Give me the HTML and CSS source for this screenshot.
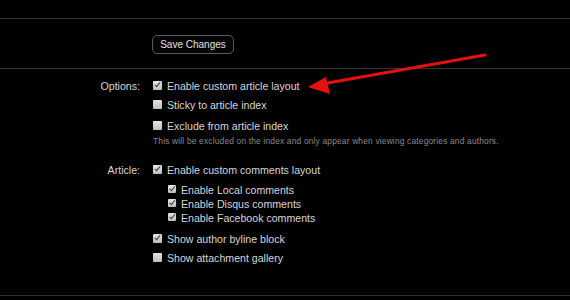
FILE: index.html
```html
<!DOCTYPE html>
<html lang="en">
<head>
    <meta charset="UTF-8">
    <title>Article Options</title>
    <link rel="stylesheet" href="styles.css">
</head>
<body>
    <div class="save-bar">
        <button class="save-btn">Save Changes</button>
    </div>

    <div class="options">
        <div class="field">
            <div class="field-label">Options:</div>
            <div class="field-body">
                <div class="opt"><span class="cb checked"></span>Enable custom article layout</div>
                <div class="opt opt-sticky"><span class="cb"></span>Sticky to article index</div>
                <div class="opt opt-exclude"><span class="cb"></span>Exclude from article index</div>
                <div class="hint">This will be excluded on the index and only appear when viewing categories and authors.</div>
            </div>
        </div>

        <div class="field field-article">
            <div class="field-label">Article:</div>
            <div class="field-body">
                <div class="opt"><span class="cb checked"></span>Enable custom comments layout</div>
                <div class="sub-opts">
                    <div class="sub"><span class="cb checked"></span>Enable Local comments</div>
                    <div class="sub"><span class="cb checked"></span>Enable Disqus comments</div>
                    <div class="sub"><span class="cb checked"></span>Enable Facebook comments</div>
                </div>
                <div class="opt opt-byline"><span class="cb checked"></span>Show author byline block</div>
                <div class="opt opt-gallery"><span class="cb"></span>Show attachment gallery</div>
            </div>
        </div>
    </div>

    <svg class="arrow" width="570" height="300" viewBox="0 0 570 300">
        <line x1="485" y1="55" x2="322" y2="84" stroke="#e3120f" stroke-width="3" stroke-linecap="round"/>
        <polygon points="308,87 326,77 330,94" fill="#e3120f"/>
    </svg>
</body>
</html>
```

FILE: styles.css
```css
:root {
    --text-color: #d6d6d6;
    --hint-color: #8a8a8a;
    --rule-color: #333;
}

body {
    margin: 0;
    padding-top: 18px;
    background-color: #000;
    color: var(--text-color);
    font-family: 'Liberation Sans', Arial, sans-serif;
    font-size: 10.6px;
    width: 570px;
    height: 300px;
    box-sizing: border-box;
    overflow: hidden;
    position: relative;
}

.save-bar {
    border-top: 1px solid var(--rule-color);
    border-bottom: 1px solid var(--rule-color);
    display: flex;
    align-items: center;
    padding-left: 152px;
    box-sizing: border-box;
    height: 51px;
}

.save-btn {
    width: 82px;
    height: 19px;
    background-color: #050505;
    color: #e0e0e0;
    border: 1px solid #5a5a5a;
    border-radius: 5px;
    font-family: 'Liberation Sans', Arial, sans-serif;
    font-size: 10px;
    padding: 0;
    margin-top: 1px;
}

.options {
    padding-top: 9px;
    height: 227px;
    box-sizing: border-box;
    border-bottom: 1px solid var(--rule-color);
}

.field {
    display: grid;
    grid-template-columns: 140px 1fr;
    column-gap: 13px;
}

.field-article {
    margin-top: 15px;
}

.field-label {
    text-align: right;
    line-height: 16px;
}

.opt {
    display: flex;
    align-items: center;
    line-height: 16px;
}

.opt-sticky {
    margin-top: 3px;
}

.opt-exclude {
    margin-top: 5px;
}

.opt-byline {
    margin-top: 6px;
}

.opt-gallery {
    margin-top: 3px;
}

.hint {
    margin-top: 1px;
    line-height: 12px;
    font-size: 8.4px;
    letter-spacing: 0.18px;
    color: var(--hint-color);
}

.sub-opts {
    margin-top: 5px;
    padding-left: 15px;
}

.sub {
    display: flex;
    align-items: center;
    line-height: 14px;
}

.cb {
    width: 9px;
    height: 9px;
    margin-right: 5px;
    flex: none;
    background: linear-gradient(#e4e4e4, #bdbdbd);
    border-radius: 1px;
    position: relative;
    top: -1px;
}

.sub .cb {
    width: 8px;
    height: 8px;
}

.cb.checked::after {
    content: '';
    position: absolute;
    left: 3px;
    top: 0px;
    width: 2px;
    height: 5px;
    border-right: 1.5px solid #3a3a3a;
    border-bottom: 1.5px solid #3a3a3a;
    transform: rotate(40deg);
}

.sub .cb.checked::after {
    left: 2.5px;
    height: 4.5px;
}

.arrow {
    position: absolute;
    left: 0;
    top: 0;
    pointer-events: none;
}
```
